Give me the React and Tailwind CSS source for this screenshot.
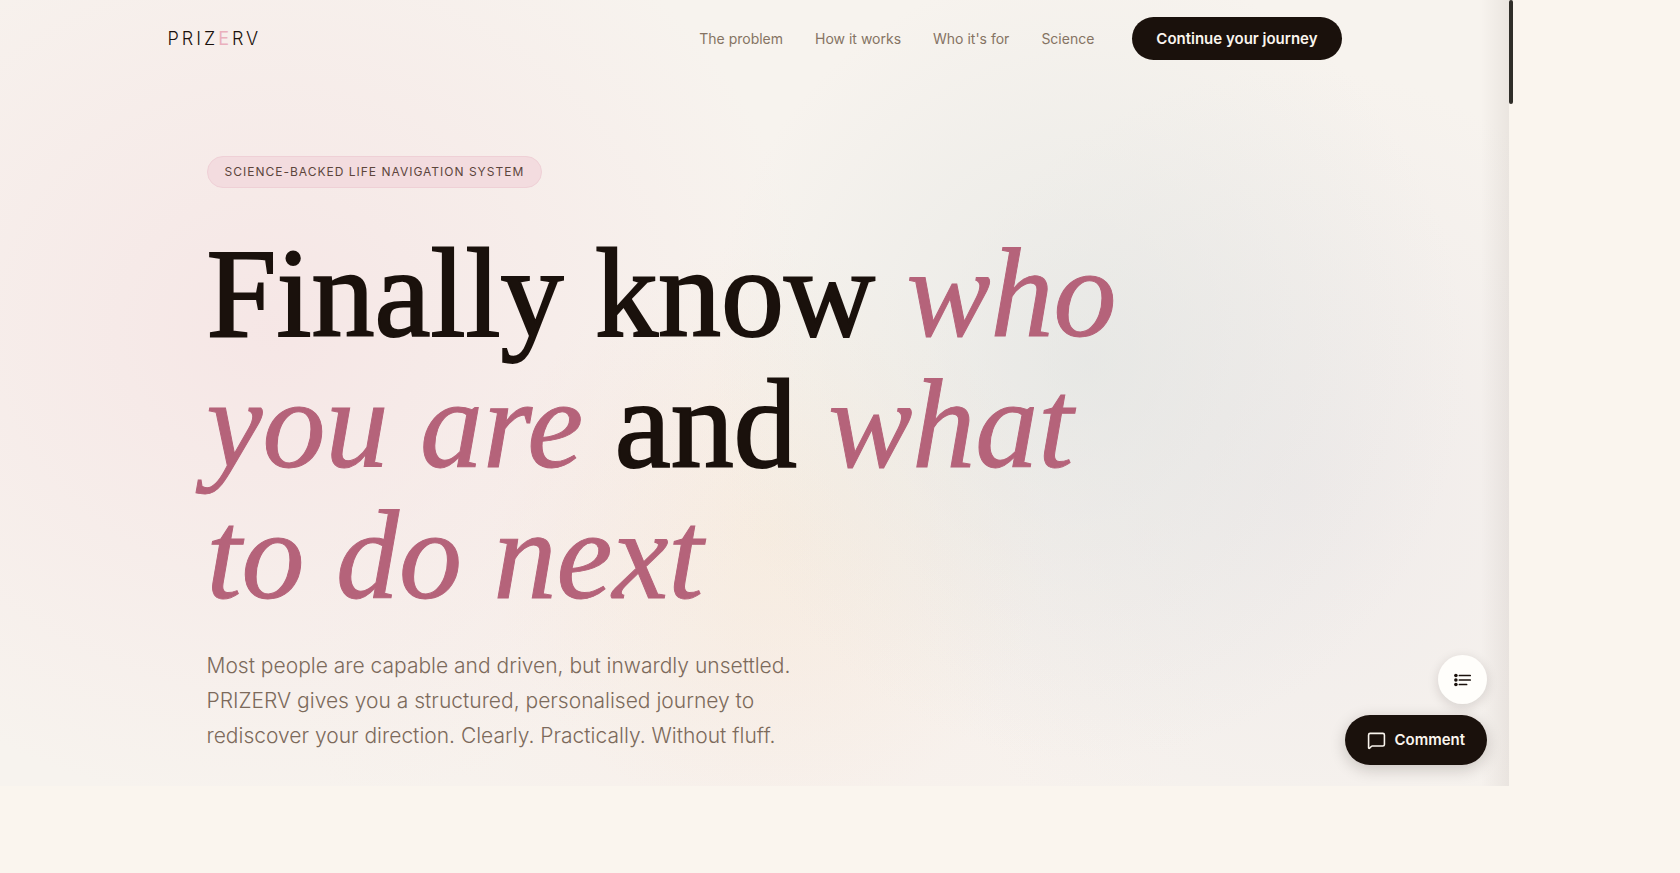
import React from "react";
import { MessageSquare } from "lucide-react";

const links = [
  { label: "The problem", href: "#problem" },
  { label: "How it works", href: "#how" },
  { label: "Who it's for", href: "#who" },
  { label: "Science", href: "#science" },
];

const ListIcon = () => (
  <svg viewBox="0 0 18 14" className="w-[18px] h-[14px]" fill="none" aria-hidden="true">
    <g fill="#1a110c">
      <circle cx="1.9" cy="2.5" r="1.8" />
      <circle cx="1.9" cy="7" r="1.8" />
      <circle cx="1.9" cy="11.5" r="1.8" />
    </g>
    <path
      d="M5.4 2.5h10.8M5.4 7h10.8M5.4 11.5h7.2"
      stroke="#1a110c"
      strokeWidth="1.7"
      strokeLinecap="round"
    />
  </svg>
);

const Navbar = () => {
  return (
    <header className="px-6">
      <div className="max-w-[1174px] mx-auto h-[77px] flex items-center justify-between">
        <a href="#top" className="text-lg font-light tracking-[3px] text-[#1a110c]">
          PRIZ<span className="font-normal text-[#eab0bd]">E</span>RV
        </a>
        <nav className="flex items-center gap-8 text-sm text-[#857363]">
          {links.map((link) => (
            <a key={link.href} href={link.href}>
              {link.label}
            </a>
          ))}
          <button
            type="button"
            className="ml-1.5 h-[43px] px-6 rounded-full bg-[#1a110c] text-[15px] text-[#faf5ee] font-semibold"
          >
            Continue your journey
          </button>
        </nav>
      </div>
    </header>
  );
};

const Hero = () => {
  return (
    <section className="px-6">
      <div className="max-w-[1096px] mx-auto pt-[79px] pb-[33px]">
        <p className="w-fit h-8 px-[17px] flex items-center rounded-full border border-[#efd0d6] bg-[#f3dcdf] text-xs tracking-[1px] text-[#5c453c]">
          SCIENCE-BACKED LIFE NAVIGATION SYSTEM
        </p>
        <h1 className="mt-10 max-w-[940px] font-['Liberation_Serif',serif] text-[126px] leading-[131px] text-[#1a110c] [-webkit-text-stroke:2px_currentColor]">
          Finally know{" "}
          <em className="text-[#b5637a] [-webkit-text-stroke:1px_currentColor]">
            who you are
          </em>{" "}
          and{" "}
          <em className="text-[#b5637a] [-webkit-text-stroke:1px_currentColor]">
            what to do next
          </em>
        </h1>
        <p className="mt-[27px] max-w-[600px] text-[21px] leading-[35px] font-light text-[#7c6a5b]">
          Most people are capable and driven, but inwardly unsettled. PRIZERV
          gives you a structured, personalised journey to rediscover your
          direction. Clearly. Practically. Without fluff.
        </p>
      </div>
    </section>
  );
};

const App = () => {
  return (
    <div className="min-h-screen flex items-start bg-[#faf5ee] font-['Inter',sans-serif]">
      <main
        id="top"
        className="relative flex-1 bg-[#f7f3ee] bg-[radial-gradient(ellipse_540px_480px_at_18%_42%,rgba(245,222,224,0.6),transparent),radial-gradient(ellipse_380px_400px_at_72%_46%,rgba(219,224,222,0.5),transparent),radial-gradient(ellipse_280px_290px_at_51%_68%,rgba(246,230,208,0.4),transparent),radial-gradient(ellipse_400px_420px_at_86%_62%,rgba(229,223,228,0.4),transparent),radial-gradient(ellipse_460px_340px_at_50%_84%,rgba(248,230,226,0.3),transparent)]"
      >
        {/* soft shade along the right edge */}
        <div className="absolute inset-y-0 right-0 w-7 bg-linear-to-r from-transparent to-[#5a463c]/8" />
        <Navbar />
        <Hero />
        <div className="absolute right-[22px] bottom-[21px] flex flex-col items-end gap-[11px]">
          <button
            type="button"
            aria-label="Show comments"
            className="size-[49px] flex items-center justify-center rounded-full bg-[#fffefb] shadow-[0_3px_12px_rgba(26,17,12,0.14)]"
          >
            <ListIcon />
          </button>
          <button
            type="button"
            className="h-[50px] px-[22px] flex items-center gap-2 rounded-full bg-[#1a110c] text-[15px] font-semibold text-[#faf5ee] shadow-[0_4px_16px_rgba(26,17,12,0.2)]"
          >
            <MessageSquare size={19} strokeWidth={2} />
            Comment
          </button>
        </div>
      </main>
      <aside className="w-[171px]">
        <div className="h-[104px] w-1 rounded-full bg-[#302e29]" />
      </aside>
    </div>
  );
};

export default App;
